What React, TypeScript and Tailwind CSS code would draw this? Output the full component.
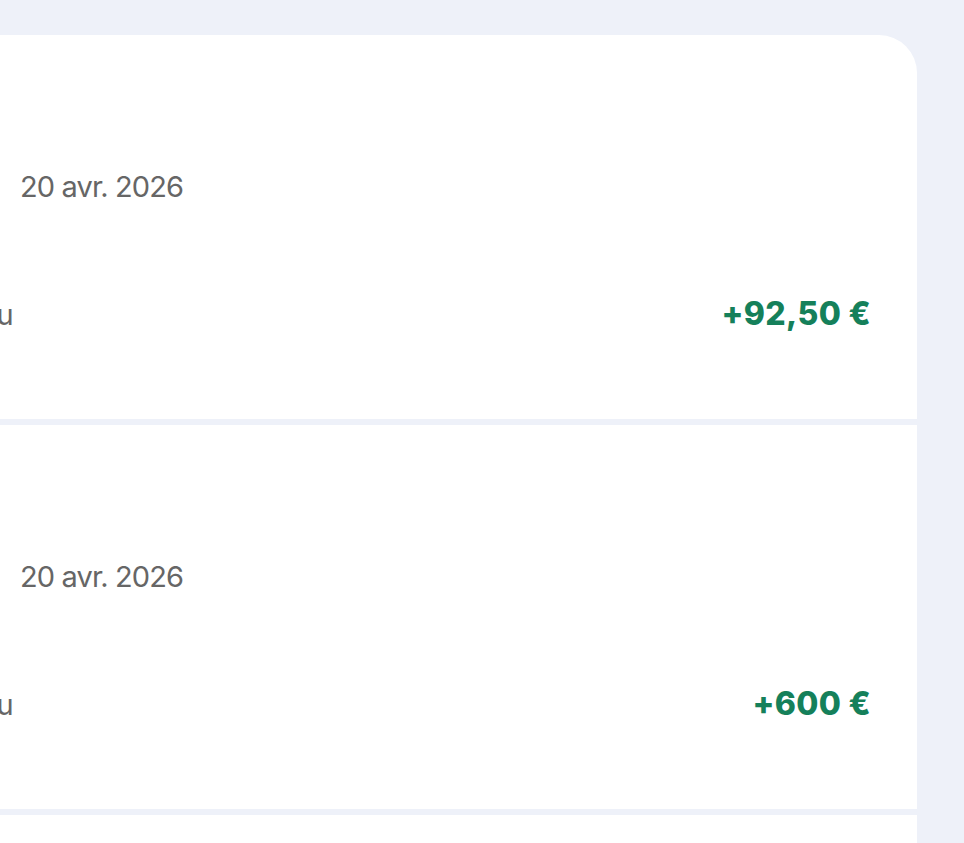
import React from "react";

const rows = [
  { date: "20 avr. 2026", label: "Reçu", amount: "+92,50 €" },
  { date: "20 avr. 2026", label: "Reçu", amount: "+600 €" },
];

export default function App() {
  return (
    <div
      className="w-[964px] h-[843px] overflow-hidden bg-[#eef1f9]"
      style={{ fontFamily: "Inter, 'Liberation Sans', sans-serif" }}
    >
      <div className="mt-[35px] -ml-[120px] w-[1037px] flex flex-col gap-[6px] rounded-tr-[38px] rounded-tl-[38px] overflow-hidden">
        {rows.map((r, i) => (
          <div key={i} className="bg-white h-[384px] pl-[140px] pr-[46px] flex flex-col">
            <div className="mt-[133px] h-[36px] flex items-center text-[29px] leading-none text-[#666666] tracking-[-0.03em] whitespace-nowrap">
              {r.date}
            </div>
            <div className="mt-[90px] h-[40px] flex items-center justify-between">
              <div className="-ml-[160px] w-[153px] flex justify-end">
                <span className="whitespace-nowrap text-[29px] leading-none text-[#666666] tracking-[-0.02em]">
                  {r.label}
                </span>
              </div>
              <div className="text-[32px] leading-none font-extrabold text-[#15805a] tracking-[0.01em] whitespace-nowrap">
                {r.amount}
              </div>
            </div>
          </div>
        ))}
        <div className="bg-white h-[384px]" />
      </div>
    </div>
  );
}
